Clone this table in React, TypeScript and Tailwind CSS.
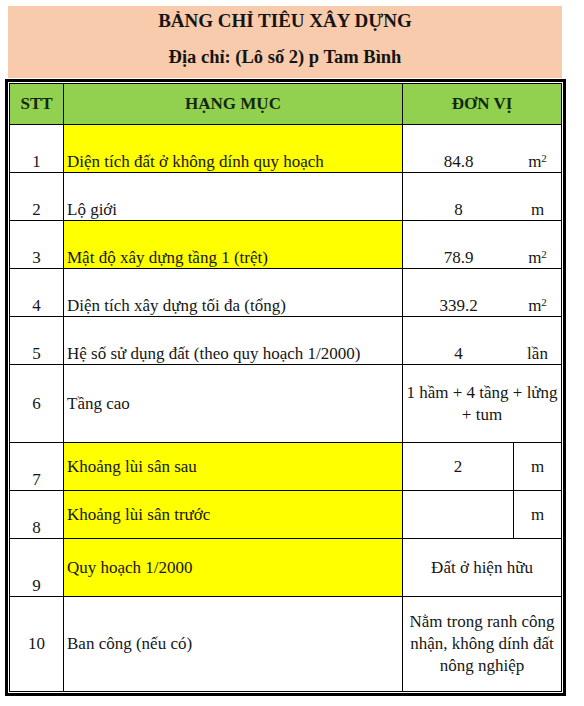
import React from "react";

const serif = "font-['Liberation_Serif','Times_New_Roman',serif]";
const txt = `text-[17px] text-[#161616] ${serif}`;

function Sq() {
  return (
    <span>
      m<sup className="text-[11px]">2</sup>
    </span>
  );
}

type Row = {
  h: string;
  stt: string;
  sttAlign: string;
  name: string;
  nameAlign: string;
  yellow: boolean;
  right: React.ReactNode;
  last?: boolean;
};

function ValUnit({ v, u, align }: { v: React.ReactNode; u: React.ReactNode; align: string }) {
  return (
    <div className="flex w-[158px]">
      <div className={`flex w-[111px] justify-center ${align}`}>{v}</div>
      <div className={`flex w-[47px] justify-center ${align}`}>{u}</div>
    </div>
  );
}

function SplitValUnit({ v, u }: { v: React.ReactNode; u: React.ReactNode }) {
  return (
    <div className="flex w-[158px]">
      <div className="flex w-[111px] items-center justify-center border-r border-black">{v}</div>
      <div className="flex w-[47px] items-center justify-center">{u}</div>
    </div>
  );
}

function Merged({ children }: { children: React.ReactNode }) {
  return (
    <div className="flex w-[158px] flex-col items-center justify-center text-center leading-[22px]">
      {children}
    </div>
  );
}

const rows: Row[] = [
  {
    h: "h-[48px]",
    stt: "1",
    sttAlign: "items-end",
    name: "Diện tích đất ở không dính quy hoạch",
    nameAlign: "items-end",
    yellow: true,
    right: <ValUnit v="84.8" u={<Sq />} align="items-end" />,
  },
  {
    h: "h-[48px]",
    stt: "2",
    sttAlign: "items-end",
    name: "Lộ giới",
    nameAlign: "items-end",
    yellow: false,
    right: <ValUnit v="8" u="m" align="items-end" />,
  },
  {
    h: "h-[48px]",
    stt: "3",
    sttAlign: "items-end",
    name: "Mật độ xây dựng tầng 1 (trệt)",
    nameAlign: "items-end",
    yellow: true,
    right: <ValUnit v="78.9" u={<Sq />} align="items-end" />,
  },
  {
    h: "h-[48px]",
    stt: "4",
    sttAlign: "items-end",
    name: "Diện tích xây dựng tối đa (tổng)",
    nameAlign: "items-end",
    yellow: false,
    right: <ValUnit v="339.2" u={<Sq />} align="items-end" />,
  },
  {
    h: "h-[48px]",
    stt: "5",
    sttAlign: "items-end",
    name: "Hệ số sử dụng đất (theo quy hoạch 1/2000)",
    nameAlign: "items-end",
    yellow: false,
    right: <ValUnit v="4" u="lần" align="items-end" />,
  },
  {
    h: "h-[78px]",
    stt: "6",
    sttAlign: "items-center",
    name: "Tầng cao",
    nameAlign: "items-center",
    yellow: false,
    right: (
      <Merged>
        <span>1 hầm + 4 tầng + lửng</span>
        <span>+ tum</span>
      </Merged>
    ),
  },
  {
    h: "h-[48px]",
    stt: "7",
    sttAlign: "items-end",
    name: "Khoảng lùi sân sau",
    nameAlign: "items-center",
    yellow: true,
    right: <SplitValUnit v="2" u="m" />,
  },
  {
    h: "h-[48px]",
    stt: "8",
    sttAlign: "items-end",
    name: "Khoảng lùi sân trước",
    nameAlign: "items-center",
    yellow: true,
    right: <SplitValUnit v="" u="m" />,
  },
  {
    h: "h-[58px]",
    stt: "9",
    sttAlign: "items-end",
    name: "Quy hoạch 1/2000",
    nameAlign: "items-center",
    yellow: true,
    right: (
      <Merged>
        <span>Đất ở hiện hữu</span>
      </Merged>
    ),
  },
  {
    h: "h-[94px]",
    stt: "10",
    sttAlign: "items-center",
    name: "Ban công (nếu có)",
    nameAlign: "items-center",
    yellow: false,
    last: true,
    right: (
      <Merged>
        <span>Nằm trong ranh công</span>
        <span>nhận, không dính đất</span>
        <span>nông nghiệp</span>
      </Merged>
    ),
  },
];

export default function App() {
  return (
    <div className={`min-h-[706px] w-[584px] bg-white pt-[6px] ${serif}`}>
      <div
        className={`ml-[8px] flex h-[72px] w-[554px] flex-col items-center bg-[#f8cbad] pt-[3px] font-bold text-[#141414] ${serif}`}
      >
        <div className="h-[24px] text-[19px] leading-[24px]">BẢNG CHỈ TIÊU XÂY DỰNG</div>
        <div className="mt-[12px] h-[24px] text-[18.5px] leading-[24px]">Địa chỉ: (Lô số 2) p Tam Bình</div>
      </div>
      <div className="ml-[5px] mt-[1px] w-[561px] border-[3px] border-black bg-white p-px">
        <div className={`border border-black ${txt}`}>
          <div className="flex h-[41px] border-b border-black bg-[#92d050] text-[17px] font-bold text-[#13280b]">
            <div className="flex w-[54px] items-center justify-center border-r border-black">STT</div>
            <div className="flex w-[339px] items-center justify-center border-r border-black">HẠNG MỤC</div>
            <div className="flex w-[158px] items-center justify-center">ĐƠN VỊ</div>
          </div>
          {rows.map((r) => (
            <div key={r.stt} className={`flex ${r.h} ${r.last ? "" : "border-b border-black"} leading-[20px] ${serif}`}>
              <div className={`flex w-[54px] justify-center border-r border-black ${r.sttAlign}`}>{r.stt}</div>
              <div
                className={`flex w-[339px] border-r border-black pl-[3px] ${r.nameAlign} ${
                  r.yellow ? "bg-[#ffff00]" : ""
                }`}
              >
                {r.name}
              </div>
              {r.right}
            </div>
          ))}
        </div>
      </div>
    </div>
  );
}
